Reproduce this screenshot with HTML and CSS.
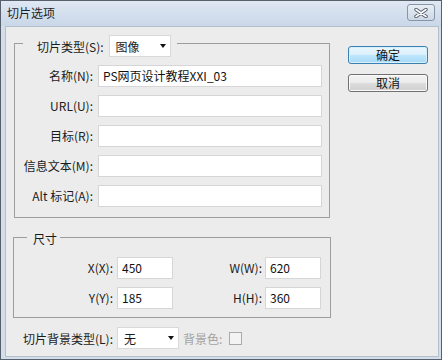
FILE: index.html
```html
<!DOCTYPE html>
<html lang="zh-CN">
<head>
<meta charset="utf-8">
<title>切片选项</title>
<link rel="stylesheet" href="styles.css">
</head>
<body>
<div class="window">
  <div class="titlebar">
    <span class="title">切片选项</span>
    <div class="close">
      <svg width="14" height="10" viewBox="0 0 14 10">
        <path d="M2 1.5 L12 8.5 M12 1.5 L2 8.5" stroke="#555d6a" stroke-width="3.4" stroke-linecap="round"/>
        <path d="M2 1.5 L12 8.5 M12 1.5 L2 8.5" stroke="#ffffff" stroke-width="1.6" stroke-linecap="round"/>
      </svg>
    </div>
  </div>
  <div class="client">
    <div class="main">
      <div class="group g1">
        <div class="legend">
          <span>切片类型(S):</span>
          <div class="select"><span>图像</span><i class="arrow"></i></div>
        </div>
        <div class="rows">
          <div class="row"><label>名称(N):</label><div class="field">PS网页设计教程XXI_03</div></div>
          <div class="row"><label>URL(U):</label><div class="field"></div></div>
          <div class="row"><label>目标(R):</label><div class="field"></div></div>
          <div class="row"><label>信息文本(M):</label><div class="field"></div></div>
          <div class="row"><label>Alt 标记(A):</label><div class="field"></div></div>
        </div>
      </div>
      <div class="group g2">
        <div class="legend"><span>尺寸</span></div>
        <div class="dims">
          <label class="l1">X(X):</label><div class="field">450</div>
          <label class="l2">W(W):</label><div class="field">620</div>
          <label class="l1">Y(Y):</label><div class="field">185</div>
          <label class="l2">H(H):</label><div class="field">360</div>
        </div>
      </div>
      <div class="bgrow">
        <label>切片背景类型(L):</label>
        <div class="select sel2"><span>无</span><i class="arrow"></i></div>
        <span class="muted">背景色:</span>
        <span class="check"></span>
      </div>
    </div>
    <div class="buttons">
      <div class="btn ok">确定</div>
      <div class="btn cancel">取消</div>
    </div>
  </div>
</div>
</body>
</html>
```
FILE: styles.css
```css
* { box-sizing: border-box; margin: 0; padding: 0; }
body {
  margin: 0;
  width: 442px;
  height: 360px;
  overflow: hidden;
  font-family: "Noto Sans CJK SC", "Noto Sans", sans-serif;
  font-size: 12px;
  color: #1b1b1b;
  background: #ffffff;
}
.window {
  width: 442px;
  height: 360px;
  border: 1px solid #58606c;
  background: #d3deeb;
  display: flex;
  flex-direction: column;
}
.titlebar {
  height: 25px;
  flex: none;
  display: flex;
  align-items: flex-start;
  padding-left: 6px;
  background: linear-gradient(#dfe8f3, #c9d7e8);
}
.title {
  line-height: 24px;
  color: #1e1e1e;
}
.close {
  margin-left: auto;
  margin-right: 6px;
  margin-top: 3px;
  width: 28px;
  height: 17px;
  border: 1px solid #8895a8;
  border-radius: 3px;
  background: linear-gradient(#e8eef5, #cdd8e5);
  display: flex;
  align-items: center;
  justify-content: center;
}
.client {
  flex: 1;
  margin: 0 2px 2px 4px;
  border: 1px solid #b3bfcd;
  background: #ececec;
  display: flex;
}
.main {
  width: 325px;
  flex: none;
  padding-left: 8px;
  display: flex;
  flex-direction: column;
}
.group {
  border: 1px solid #9d9d9d;
  display: flex;
  flex-direction: column;
}
.legend {
  display: flex;
  align-items: center;
  align-self: flex-start;
  background: #ececec;
}
.g1 {
  margin-top: 16px;
  width: 316px;
  padding: 0 7px 10px 0;
}
.g1 .legend {
  margin: -9px 0 0 8px;
  padding: 0 6px 0 14px;
  height: 22px;
  gap: 5px;
}
.rows {
  display: flex;
  flex-direction: column;
  gap: 8px;
  margin-top: 8px;
}
.row {
  display: flex;
  align-items: center;
  gap: 5px;
}
.row label {
  width: 78px;
  text-align: right;
  line-height: 16px;
}
.field {
  height: 22px;
  border: 1px solid #d6d6d6;
  background: #ffffff;
  padding-left: 4px;
  line-height: 20px;
  color: #111;
}
.row .field { width: 224px; }
.g2 {
  margin: 19px 0 0 -1px;
  width: 318px;
  padding: 0 9px 8px 0;
}
.g2 .legend {
  margin: -9px 0 0 13px;
  padding: 0 3px 0 6px;
  height: 18px;
}
.dims {
  display: grid;
  grid-template-columns: 103px 56px 92px 56px;
  row-gap: 8px;
  margin-top: 10px;
  align-items: center;
}
.dims label { text-align: right; line-height: 16px; }
.dims .l1 { padding-right: 4px; }
.dims .l2 { padding-right: 3px; }
.select {
  display: flex;
  align-items: center;
  justify-content: space-between;
  height: 22px;
  width: 62px;
  border: 1px solid #d9d9d9;
  background: #ffffff;
  padding: 0 4px 0 6px;
}
.arrow {
  width: 0;
  height: 0;
  border-left: 3.5px solid transparent;
  border-right: 3.5px solid transparent;
  border-top: 4px solid #111111;
}
.bgrow {
  display: flex;
  align-items: center;
  margin-top: 9px;
  padding-left: 8px;
}
.bgrow label {
  width: 95px;
  padding-right: 4px;
  text-align: right;
  white-space: nowrap;
}
.muted {
  color: #a3a3a3;
  margin-left: 4px;
}
.check {
  width: 13px;
  height: 13px;
  border: 1px solid #a9a9a9;
  background: #f3f3f3;
  margin-left: 7px;
}
.buttons {
  display: flex;
  flex-direction: column;
  gap: 10px;
  margin: 19px 0 0 17px;
}
.btn {
  width: 80px;
  height: 18px;
  border-radius: 3px;
  display: flex;
  align-items: center;
  justify-content: center;
  line-height: 16px;
  color: #111;
}
.ok {
  border: 1px solid #3c7fb1;
  background: linear-gradient(#eaf6fd 0, #d9f0fc 50%, #bee6fd 50%, #a7d9f5 100%);
  box-shadow: inset 0 0 0 1px #d6effc;
}
.cancel {
  border: 1px solid #707070;
  background: linear-gradient(#f2f2f2 0, #ebebeb 50%, #dddddd 50%, #cfcfcf 100%);
  box-shadow: inset 0 0 0 1px #fbfbfb;
}
```
